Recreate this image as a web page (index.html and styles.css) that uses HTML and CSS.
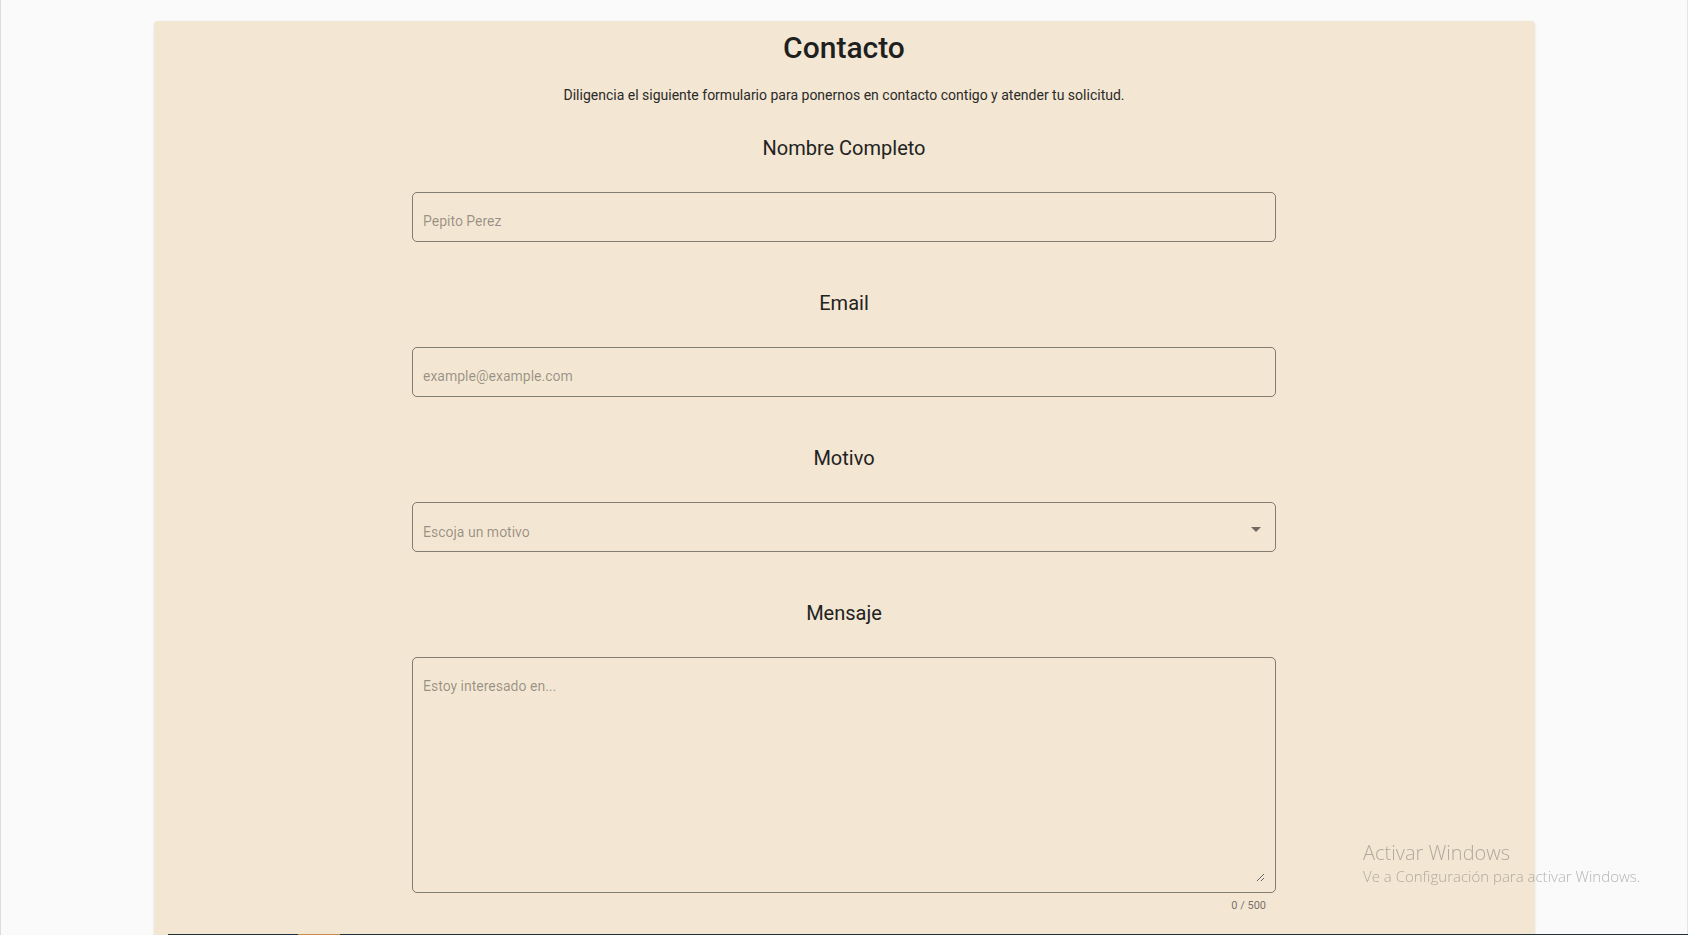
FILE: index.html
```html
<!DOCTYPE html>
<html lang="es">
<head>
<meta charset="utf-8">
<title>Contacto</title>
<link rel="stylesheet" href="styles.css">
</head>
<body>
<div class="page">
  <main class="card">
    <h1 class="title">Contacto</h1>
    <p class="subtitle">Diligencia el siguiente formulario para ponernos en contacto contigo y atender tu solicitud.</p>
    <form class="form">
      <div class="group">
        <label class="label" for="nombre">Nombre Completo</label>
        <div class="field"><input id="nombre" class="control" type="text" placeholder="Pepito Perez"></div>
      </div>
      <div class="group">
        <label class="label" for="email">Email</label>
        <div class="field"><input id="email" class="control" type="email" placeholder="example@example.com"></div>
      </div>
      <div class="group">
        <label class="label">Motivo</label>
        <div class="field field-select" role="combobox">
          <span class="select-placeholder">Escoja un motivo</span>
          <span class="select-arrow"></span>
        </div>
      </div>
      <div class="group">
        <label class="label" for="mensaje">Mensaje</label>
        <div class="field field-area"><textarea id="mensaje" class="area" placeholder="Estoy interesado en..."></textarea></div>
        <div class="hint">0 / 500</div>
      </div>
    </form>
  </main>
</div>
<div class="watermark">
  <div class="wm-title">Activar Windows</div>
  <div class="wm-sub">Ve a Configuración para activar Windows.</div>
</div>
<div class="taskbar-edge"><span class="taskbar-accent"></span></div>
</body>
</html>
```

FILE: styles.css
```css
html, body {
  margin: 0;
  padding: 0;
  height: 100%;
}
body {
  background: #fafafa;
  font-family: Roboto, "Liberation Sans", sans-serif;
  color: rgba(0, 0, 0, 0.87);
  overflow: hidden;
}
.page {
  box-sizing: border-box;
  height: 100%;
  border-left: 1px solid #dcdcdc;
  border-right: 1px solid #e6e6e6;
  padding-top: 21px;
}
.card {
  width: 1381px;
  margin: 0 auto;
  min-height: 960px;
  background: #f3e6d2;
  border-radius: 4px;
  box-shadow: 0 2px 1px -1px rgba(0,0,0,.12), 0 1px 1px 0 rgba(0,0,0,.08), 0 1px 3px 0 rgba(0,0,0,.08);
  padding-top: 10px;
  display: flex;
  flex-direction: column;
  align-items: center;
}
.title {
  margin: 0;
  font-size: 30px;
  line-height: 34px;
  font-weight: 500;
  color: #1f1f1f;
}
.subtitle {
  margin: 20px 0 0;
  font-size: 14px;
  line-height: 20px;
  color: #2a2a2a;
}
.form {
  width: 864px;
  margin-top: 31px;
  display: flex;
  flex-direction: column;
  gap: 49px;
}
.group {
  display: flex;
  flex-direction: column;
  position: relative;
}
.label {
  text-align: center;
  font-size: 20px;
  line-height: 24px;
  color: #222;
  margin-bottom: 32px;
}
.field {
  box-sizing: border-box;
  height: 50px;
  border: 1px solid rgba(0, 0, 0, 0.46);
  border-radius: 5px;
  display: flex;
  align-items: flex-start;
}
.control {
  box-sizing: border-box;
  width: 100%;
  border: 0;
  outline: none;
  background: transparent;
  font-family: Roboto, "Liberation Sans", sans-serif;
  font-size: 14px;
  line-height: 18px;
  padding: 19px 10px 0;
  color: rgba(0, 0, 0, 0.87);
}
.control::placeholder,
.area::placeholder {
  color: rgba(0, 0, 0, 0.38);
}
.field-select {
  padding: 19px 10px 0;
  justify-content: space-between;
}
.select-placeholder {
  font-size: 14px;
  line-height: 20px;
  color: rgba(0, 0, 0, 0.38);
}
.select-arrow {
  width: 0;
  height: 0;
  border-left: 5px solid transparent;
  border-right: 5px solid transparent;
  border-top: 5px solid rgba(0, 0, 0, 0.54);
  margin-top: 5px;
  margin-right: 4px;
}
.field-area {
  height: 236px;
  padding: 19px 10px 10px;
}
.area {
  box-sizing: border-box;
  width: 100%;
  height: 100%;
  border: 0;
  outline: none;
  background: transparent;
  font-family: Roboto, "Liberation Sans", sans-serif;
  font-size: 14px;
  line-height: 18px;
  padding: 0;
  margin: 0;
  color: rgba(0, 0, 0, 0.87);
}
.hint {
  align-self: flex-end;
  font-size: 11px;
  line-height: 14px;
  margin-top: 6px;
  margin-right: 10px;
  color: rgba(0, 0, 0, 0.55);
}
.watermark {
  position: fixed;
  left: 1363px;
  top: 840px;
  font-family: "Open Sans", "Noto Sans", sans-serif;
  color: rgba(110, 110, 110, 0.5);
  pointer-events: none;
}
.wm-title {
  font-size: 20px;
  line-height: 26px;
  font-weight: 300;
}
.wm-sub {
  font-size: 15px;
  line-height: 20px;
  font-weight: 300;
}
.taskbar-edge {
  position: fixed;
  left: 168px;
  right: 0;
  bottom: 0;
  height: 1px;
  background: #22303a;
}
.taskbar-accent {
  position: absolute;
  left: 130px;
  width: 42px;
  height: 1px;
  background: #c98a4a;
}
```
